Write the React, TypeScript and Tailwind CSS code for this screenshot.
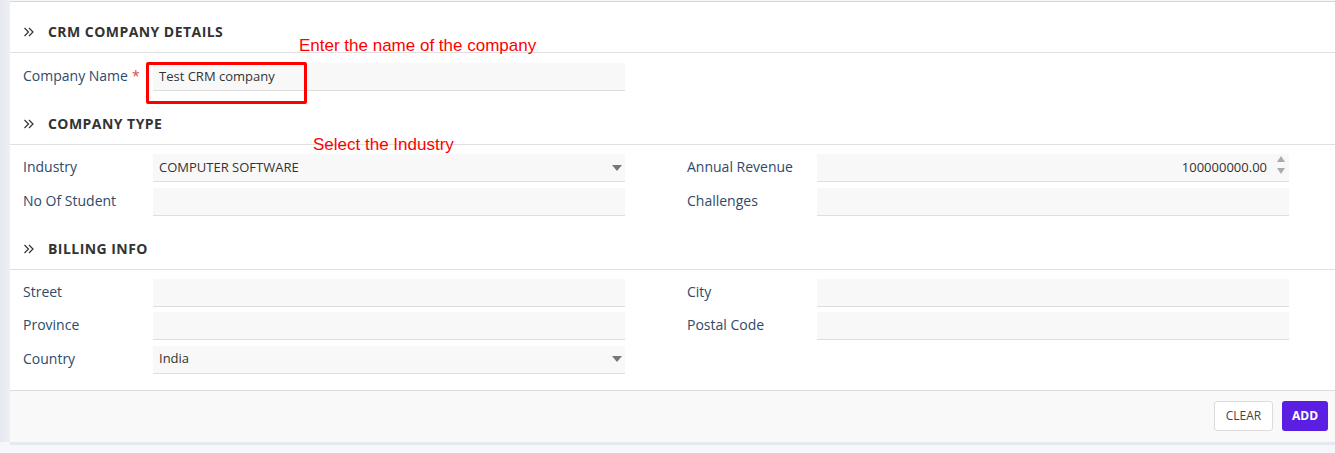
import React from 'react';

const font = { fontFamily: '"Open Sans", "Noto Sans", sans-serif' };
const arial = { fontFamily: '"Liberation Sans", Arial, sans-serif' };

const Chevrons = () => (
  <svg width="12" height="12" viewBox="0 0 12 12" className="text-[#333]">
    <path d="M1.5 2 L5.5 6 L1.5 10 M6 2 L10 6 L6 10" fill="none" stroke="currentColor" strokeWidth="1.2" />
  </svg>
);

const SectionHeader = ({ title, top }: { title: string; top: string }) => (
  <div className={`flex items-center gap-[13px] pl-[13px] pb-[10px] border-b border-[#e0e0e0] ${top}`}>
    <Chevrons />
    <span className="text-[14px] leading-[20px] font-bold text-[#333] tracking-[0.45px]">{title}</span>
  </div>
);

const Caret = () => (
  <svg width="10" height="6" viewBox="0 0 10 6" className="absolute right-[3px] top-1/2 -translate-y-1/2">
    <path d="M0 0 H10 L5 6 Z" fill="#777" />
  </svg>
);

const Field = ({
  label,
  value,
  required,
  select,
  number,
}: {
  label: string;
  value?: string;
  required?: boolean;
  select?: boolean;
  number?: boolean;
}) => (
  <div className="flex items-center">
    <div className="w-[130px] text-[14px] leading-[20px] text-[#2e4a6b] -mt-[2px]">
      {label}
      {required && <span className="text-[#e0434a] ml-1">*</span>}
    </div>
    <div className="relative w-[472px] h-[28px] bg-[#f8f8f8] border-b border-[#dedede] flex items-center px-[6px]">
      <span className={`text-[13px] text-[#333] ${number ? 'ml-auto mr-[16px]' : ''}`}>{value}</span>
      {select && <Caret />}
      {number && (
        <div className="absolute right-[4px] top-[2px] flex flex-col gap-[6px]">
          <svg width="8" height="6" viewBox="0 0 8 6"><path d="M0 6 H8 L4 0 Z" fill="#aaa" /></svg>
          <svg width="8" height="6" viewBox="0 0 8 6"><path d="M0 0 H8 L4 6 Z" fill="#aaa" /></svg>
        </div>
      )}
    </div>
  </div>
);

const App: React.FC = () => {
  return (
    <div className="flex w-[1335px] h-[453px] bg-[#f5f7fb]" style={font}>
      {/* left rail */}
      <div className="w-[10px] h-[442px] bg-gradient-to-r from-[#e6e8ef] to-[#eef0f5]" />
      <div className="flex-1 flex flex-col">
        <div className="relative bg-white border-t border-[#d6d6d6] mt-[1px] pb-[16px]">
          <SectionHeader title="CRM COMPANY DETAILS" top="pt-[20px]" />
          <div className="pl-[13px] pt-[10px]">
            <Field label="Company Name" value="Test CRM company" required />
          </div>

          <SectionHeader title="COMPANY TYPE" top="pt-[23px]" />
          <div className="pl-[13px] pt-[9px] grid grid-cols-[602px_602px] gap-x-[62px] gap-y-[5.5px]">
            <Field label="Industry" value="COMPUTER SOFTWARE" select />
            <Field label="Annual Revenue" value="100000000.00" number />
            <Field label="No Of Student" />
            <Field label="Challenges" />
          </div>

          <SectionHeader title="BILLING INFO" top="pt-[23px]" />
          <div className="pl-[13px] pt-[9px] grid grid-cols-[602px_602px] gap-x-[62px] gap-y-[5.5px]">
            <Field label="Street" />
            <Field label="City" />
            <Field label="Province" />
            <Field label="Postal Code" />
            <Field label="Country" value="India" select />
          </div>

          {/* annotations */}
          <div className="absolute left-[136px] top-[60px] w-[161px] h-[42px] border-[3px] border-[#ff0000] rounded-[2px]" />
          <div className="absolute left-[289px] top-[34px] text-[17px] text-[#ff0000] leading-[20px]" style={arial}>
            Enter the name of the company
          </div>
          <div className="absolute left-[303px] top-[133px] text-[17px] text-[#ff0000] leading-[20px]" style={arial}>
            Select the Industry
          </div>
        </div>

        {/* footer */}
        <div className="h-[52px] bg-[#f9f9f9] border-t border-[#dcdcdc] flex items-center justify-end gap-[9px] pr-[7px]">
          <button className="h-[30px] w-[59px] bg-white border border-[#dcdcdc] rounded-[3px] text-[12px] text-[#444]">
            CLEAR
          </button>
          <button className="h-[30px] w-[46px] bg-[#5b1fe3] rounded-[3px] text-[12px] font-bold text-white">
            ADD
          </button>
        </div>
        <div className="h-[3px] bg-[#e6e8f2]" />
      </div>
    </div>
  );
};

export default App;
